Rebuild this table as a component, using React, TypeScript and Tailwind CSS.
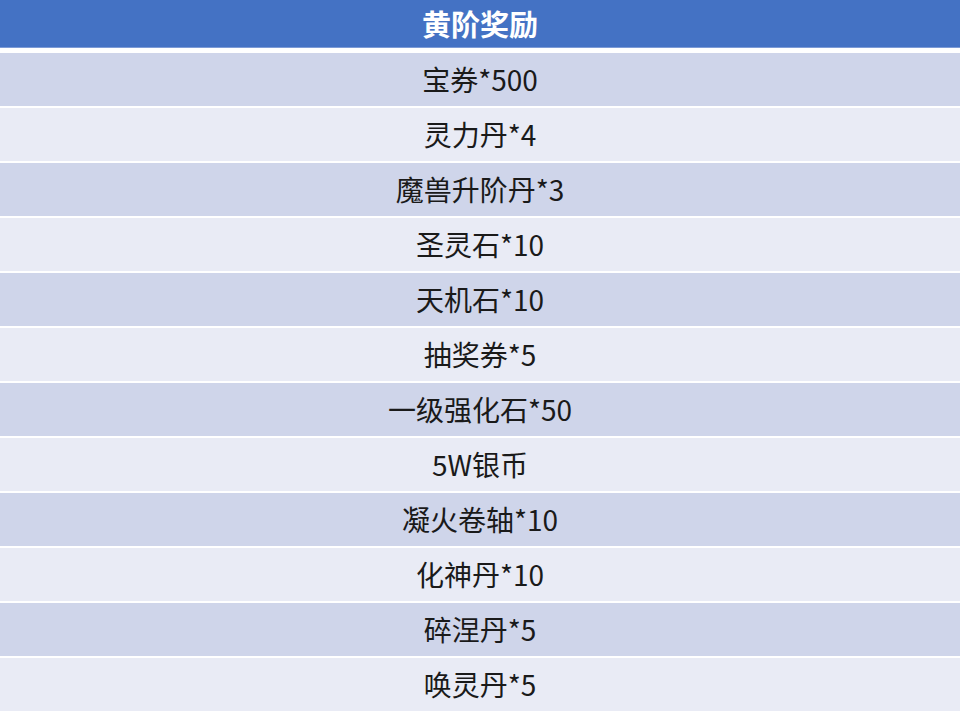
import React from "react";

const rows = [
  "宝券*500",
  "灵力丹*4",
  "魔兽升阶丹*3",
  "圣灵石*10",
  "天机石*10",
  "抽奖券*5",
  "一级强化石*50",
  "5W银币",
  "凝火卷轴*10",
  "化神丹*10",
  "碎涅丹*5",
  "唤灵丹*5",
];

export default function App() {
  return (
    <div
      className="w-[960px] h-[712px] overflow-hidden bg-white"
      style={{ fontFamily: '"Noto Sans CJK SC", "Noto Sans", sans-serif' }}
    >
      <div className="h-[48px] bg-[#4472C4] border-b border-[#7d9bd6] flex items-center justify-center text-white font-bold text-[29px] leading-none">
        黄阶奖励
      </div>
      <div className="h-[5px] bg-white" />
      <div className="flex flex-col gap-[2px]">
        {rows.map((r, i) => (
          <div
            key={i}
            className={
              "h-[53px] flex items-center justify-center text-[28px] leading-none text-[#1a1a1a] pb-[1px] " +
              (i % 2 === 0 ? "bg-[#CFD5EA]" : "bg-[#E9EBF5]")
            }
          >
            {r}
          </div>
        ))}
      </div>
    </div>
  );
}
